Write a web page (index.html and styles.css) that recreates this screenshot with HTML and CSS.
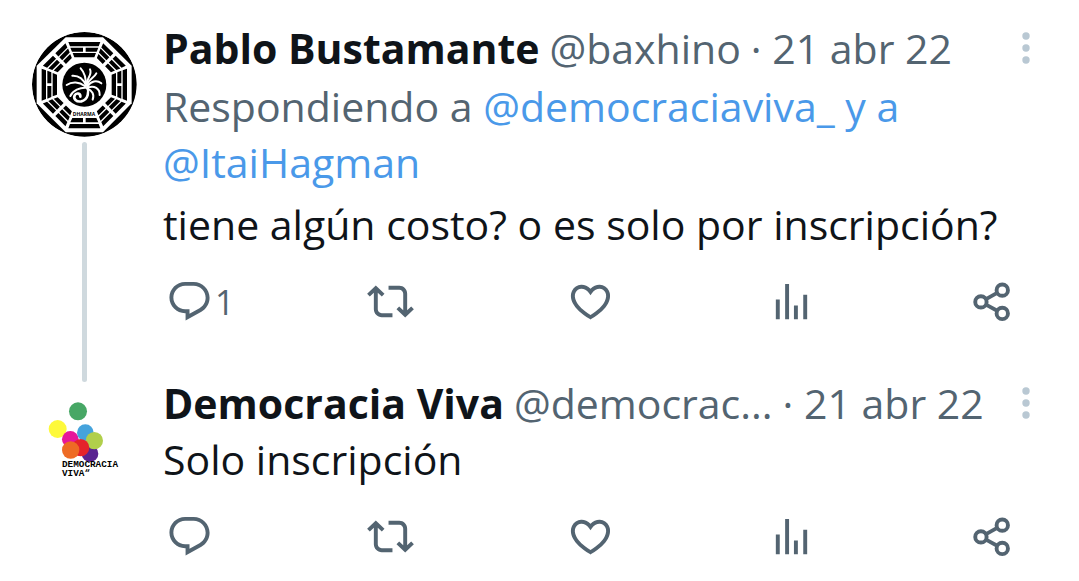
FILE: index.html
```html
<!DOCTYPE html>
<html lang="es">
<head>
  <meta charset="UTF-8">
  <meta name="viewport" content="width=device-width, initial-scale=1">
  <title>Democracia Viva</title>
  <link rel="stylesheet" href="styles.css">
</head>
<body>

  <!-- Shared icons -->
  <svg class="sprite" aria-hidden="true">
    <symbol id="icon-reply" viewBox="0 0 24 24">
      <path d="M1.751 10c0-4.42 3.584-8 8.005-8h4.366c4.49 0 8.129 3.64 8.129 8.13 0 2.96-1.607 5.68-4.196 7.11l-8.054 4.46v-3.69h-.067c-4.49.1-8.183-3.51-8.183-8.01zm8.005-6c-3.317 0-6.005 2.69-6.005 6 0 3.37 2.77 6.08 6.138 6.01l.351-.01h1.761v2.3l5.087-2.81c1.951-1.08 3.163-3.13 3.163-5.36 0-3.39-2.744-6.13-6.129-6.13H9.756z"/>
    </symbol>
    <symbol id="icon-retweet" viewBox="0 0 24 24">
      <path d="M4.5 3.88l4.432 4.14-1.364 1.46L5.5 7.55V16c0 1.1.896 2 2 2H13v2H7.5c-2.209 0-4-1.79-4-4V7.55L1.432 9.48.068 8.02 4.5 3.88zM16.5 6H11V4h5.5c2.209 0 4 1.79 4 4v8.45l2.068-1.93 1.364 1.46-4.432 4.14-4.432-4.14 1.364-1.46 2.068 1.93V8c0-1.1-.896-2-2-2z"/>
    </symbol>
    <symbol id="icon-like" viewBox="0 0 24 24">
      <path d="M16.697 5.5c-1.222-.06-2.679.51-3.89 2.16l-.805 1.09-.806-1.09C9.984 6.01 8.526 5.44 7.304 5.5c-1.243.07-2.349.78-2.91 1.91-.552 1.12-.633 2.78.479 4.82 1.074 1.97 3.257 4.27 7.129 6.61 3.87-2.34 6.052-4.64 7.126-6.61 1.111-2.04 1.03-3.7.477-4.82-.561-1.13-1.666-1.84-2.908-1.91zm4.187 7.69c-1.351 2.48-4.001 5.12-8.379 7.67l-.503.3-.504-.3c-4.379-2.55-7.029-5.19-8.382-7.67-1.36-2.5-1.41-4.86-.514-6.67.887-1.79 2.647-2.91 4.601-3.01 1.651-.09 3.368.56 4.798 2.01 1.429-1.45 3.146-2.1 4.796-2.01 1.954.1 3.714 1.22 4.601 3.01.896 1.81.846 4.17-.514 6.67z"/>
    </symbol>
    <symbol id="icon-views" viewBox="0 0 24 24">
      <path d="M8.75 21V3h2v18h-2zM18 21V8.5h2V21h-2zM4 21l.004-10h2L6 21H4zm9.248 0v-7h2v7h-2z"/>
    </symbol>
    <symbol id="icon-share" viewBox="0 0 24 24">
      <g fill="none" stroke="currentColor" stroke-width="2">
        <circle cx="6.6" cy="12.2" r="2.9"/>
        <circle cx="17.5" cy="6.2" r="2.9"/>
        <circle cx="17.5" cy="18.1" r="2.9"/>
        <path d="M9.2 10.8l5.7-3.2M9.2 13.6l5.7 3.1"/>
      </g>
    </symbol>
    <symbol id="icon-more" viewBox="0 0 16 32">
      <circle cx="8" cy="4" r="3.7"/>
      <circle cx="8" cy="16" r="3.7"/>
      <circle cx="8" cy="28" r="3.7"/>
    </symbol>
  </svg>

  <main class="thread">

    <article class="post">
      <div class="post-side">
        <svg class="avatar" viewBox="36 36 315 315" role="img" aria-label="Pablo Bustamante">
          <defs>
            <g id="trigram-solid">
              <path d="M-48 -128H48L43 -115H-43zM-35 -95H35L30 -82H-30z"/>
              <path d="M-42 -111H-4V-99H-37zM42 -111H4V-99H37z"/>
            </g>
            <g id="trigram-broken">
              <path d="M-48 -128H-5V-115H-43zM48 -128H5V-115H43z"/>
              <path d="M-42 -111H-5V-99H-37zM42 -111H5V-99H37z"/>
              <path d="M-35 -95H-5V-83H-30zM35 -95H5V-83H30z"/>
            </g>
          </defs>
          <circle cx="193" cy="193" r="157"/>
          <path fill="#fff" d="M137 52H249L335 137V250L249 337H137L50 250V137z"/>
          <g transform="translate(193 194)">
            <use href="#trigram-solid"/>
            <use href="#trigram-broken" transform="rotate(45)"/>
            <use href="#trigram-solid" transform="rotate(90)"/>
            <use href="#trigram-broken" transform="rotate(135)"/>
            <path d="M-48 131H48L43 118H-43zM-42 113H-4V100H-36zM42 113H4V100H36z"/>
            <use href="#trigram-broken" transform="rotate(225)"/>
            <use href="#trigram-solid" transform="rotate(270)"/>
            <use href="#trigram-broken" transform="rotate(315)"/>
          </g>
          <circle cx="193" cy="194" r="74" fill="#fff"/>
          <circle cx="193" cy="194" r="66"/>
          <g fill="none" stroke="#fff" stroke-width="6" stroke-linecap="round">
            <path d="M197 198C199 176 196 160 182 145"/>
            <path d="M198 196C190 177 176 166 157 167"/>
            <path d="M194 198C178 185 156 184 140 195"/>
            <path d="M200 193C200 174 218 164 210 148"/>
            <path d="M201 195C205 178 221 176 229 160"/>
            <path d="M203 199C212 184 230 179 244 190"/>
            <path d="M204 203C222 195 240 206 239 225"/>
            <path d="M201 206C216 211 224 222 218 239"/>
            <path d="M198 203C180 202 158 211 151 228"/>
            <path stroke-width="8" d="M202 197C207 214 206 239 184 244C169 247 159 236 164 226C169 217 182 220 181 230"/>
          </g>
          <text class="avatar-caption" x="192" y="289" text-anchor="middle">DHARMA</text>
        </svg>
        <div class="thread-line"></div>
      </div>
      <div class="post-main">
        <header class="post-header">
          <strong class="post-name">Pablo Bustamante</strong>
          <span class="post-handle">@baxhino</span>
          <span class="post-date">· 21 abr 22</span>
          <button class="more" aria-label="Más opciones"><svg class="icon-more"><use href="#icon-more"/></svg></button>
        </header>
        <p class="post-replying">Respondiendo a <a href="#">@democraciaviva_</a> <a href="#">y a</a> <a href="#">@ItaiHagman</a></p>
        <p class="post-text">tiene algún costo? o es solo por inscripción?</p>
        <div class="actions">
          <button class="action" aria-label="Responder"><svg class="icon"><use href="#icon-reply"/></svg><span>1</span></button>
          <button class="action" aria-label="Retwittear"><svg class="icon"><use href="#icon-retweet"/></svg></button>
          <button class="action" aria-label="Me gusta"><svg class="icon"><use href="#icon-like"/></svg></button>
          <button class="action" aria-label="Ver estadísticas"><svg class="icon"><use href="#icon-views"/></svg></button>
          <button class="action" aria-label="Compartir"><svg class="icon"><use href="#icon-share"/></svg></button>
        </div>
      </div>
    </article>

    <article class="post">
      <div class="post-side">
        <svg class="avatar" viewBox="6 51 315 315" role="img" aria-label="Democracia Viva">
          <circle cx="144" cy="124" r="27" fill="#47a765"/>
          <circle cx="83" cy="177" r="27" fill="#fdf93b"/>
          <circle cx="180" cy="251" r="25" fill="#5a2391"/>
          <circle cx="121" cy="208" r="25" fill="#e6179a"/>
          <circle cx="166" cy="188" r="25" fill="#45a3dc"/>
          <circle cx="193" cy="212" r="26" fill="#b1cf4b"/>
          <circle cx="152" cy="233" r="26" fill="#e5232b"/>
          <circle cx="122" cy="240" r="26" fill="#ee6b25"/>
          <text class="avatar-logo"><tspan x="96" y="292">DEMOCRACIA</tspan><tspan x="96" y="319">VIVA“</tspan></text>
        </svg>
      </div>
      <div class="post-main">
        <header class="post-header">
          <strong class="post-name">Democracia Viva</strong>
          <span class="post-handle">@democrac...</span>
          <span class="post-date">· 21 abr 22</span>
          <button class="more" aria-label="Más opciones"><svg class="icon-more"><use href="#icon-more"/></svg></button>
        </header>
        <p class="post-text">Solo inscripción</p>
        <div class="actions">
          <button class="action" aria-label="Responder"><svg class="icon"><use href="#icon-reply"/></svg></button>
          <button class="action" aria-label="Retwittear"><svg class="icon"><use href="#icon-retweet"/></svg></button>
          <button class="action" aria-label="Me gusta"><svg class="icon"><use href="#icon-like"/></svg></button>
          <button class="action" aria-label="Ver estadísticas"><svg class="icon"><use href="#icon-views"/></svg></button>
          <button class="action" aria-label="Compartir"><svg class="icon"><use href="#icon-share"/></svg></button>
        </div>
      </div>
    </article>

  </main>

</body>
</html>
```
FILE: styles.css
```css
body {
  margin: 0;
  background: #fff;
  color: #0f1419;
  font-family: "Open Sans", "Noto Sans", sans-serif;
  font-size: 41px;
  line-height: 56px;
}
p {
  margin: 0;
}
a {
  color: #4a99e9;
  text-decoration: none;
}
button {
  padding: 0;
  border: none;
  background: none;
  color: #536471;
  font: inherit;
  cursor: pointer;
}
svg {
  display: block;
}
.sprite {
  display: none;
}
.thread {
  padding: 20px 45px 0 32px;
}
.post {
  display: flex;
  gap: 26px;
}
.post-side {
  display: flex;
  flex-direction: column;
  align-items: center;
  padding-top: 12px;
}
.avatar {
  width: 105px;
  height: 105px;
  border-radius: 50%;
}
.avatar-caption {
  font: bold 15px "Open Sans", sans-serif;
}
.avatar-logo {
  font: bold 28px "Liberation Mono", monospace;
}
/* runs on towards the next avatar */
.thread-line {
  flex: 1;
  width: 5px;
  margin: 5px 0 -7px;
  border-radius: 3px;
  background: #cfd9de;
}
.post-main {
  flex: 1;
  min-width: 0;
  padding-bottom: 50px;
}
.post:last-child .post-main {
  padding-bottom: 0;
}
.post-header {
  display: flex;
  align-items: center;
  gap: 10px;
  white-space: nowrap;
}
.post-handle,
.post-date,
.post-replying {
  color: #536471;
}
.post-replying {
  margin: 2px 0 6px;
}
.more {
  margin-left: auto;
}
.icon-more {
  width: 16px;
  height: 32px;
  fill: #b9c8d3;
}
.actions {
  display: grid;
  grid-template-columns: repeat(4, 1fr) auto;
  margin-top: 26px;
  padding: 0 19px 0 3px;
}
.action {
  display: flex;
  align-items: center;
  gap: 2px;
  height: 47px;
  font-size: 34px;
}
.icon {
  width: 47px;
  height: 47px;
  fill: currentColor;
}
```
